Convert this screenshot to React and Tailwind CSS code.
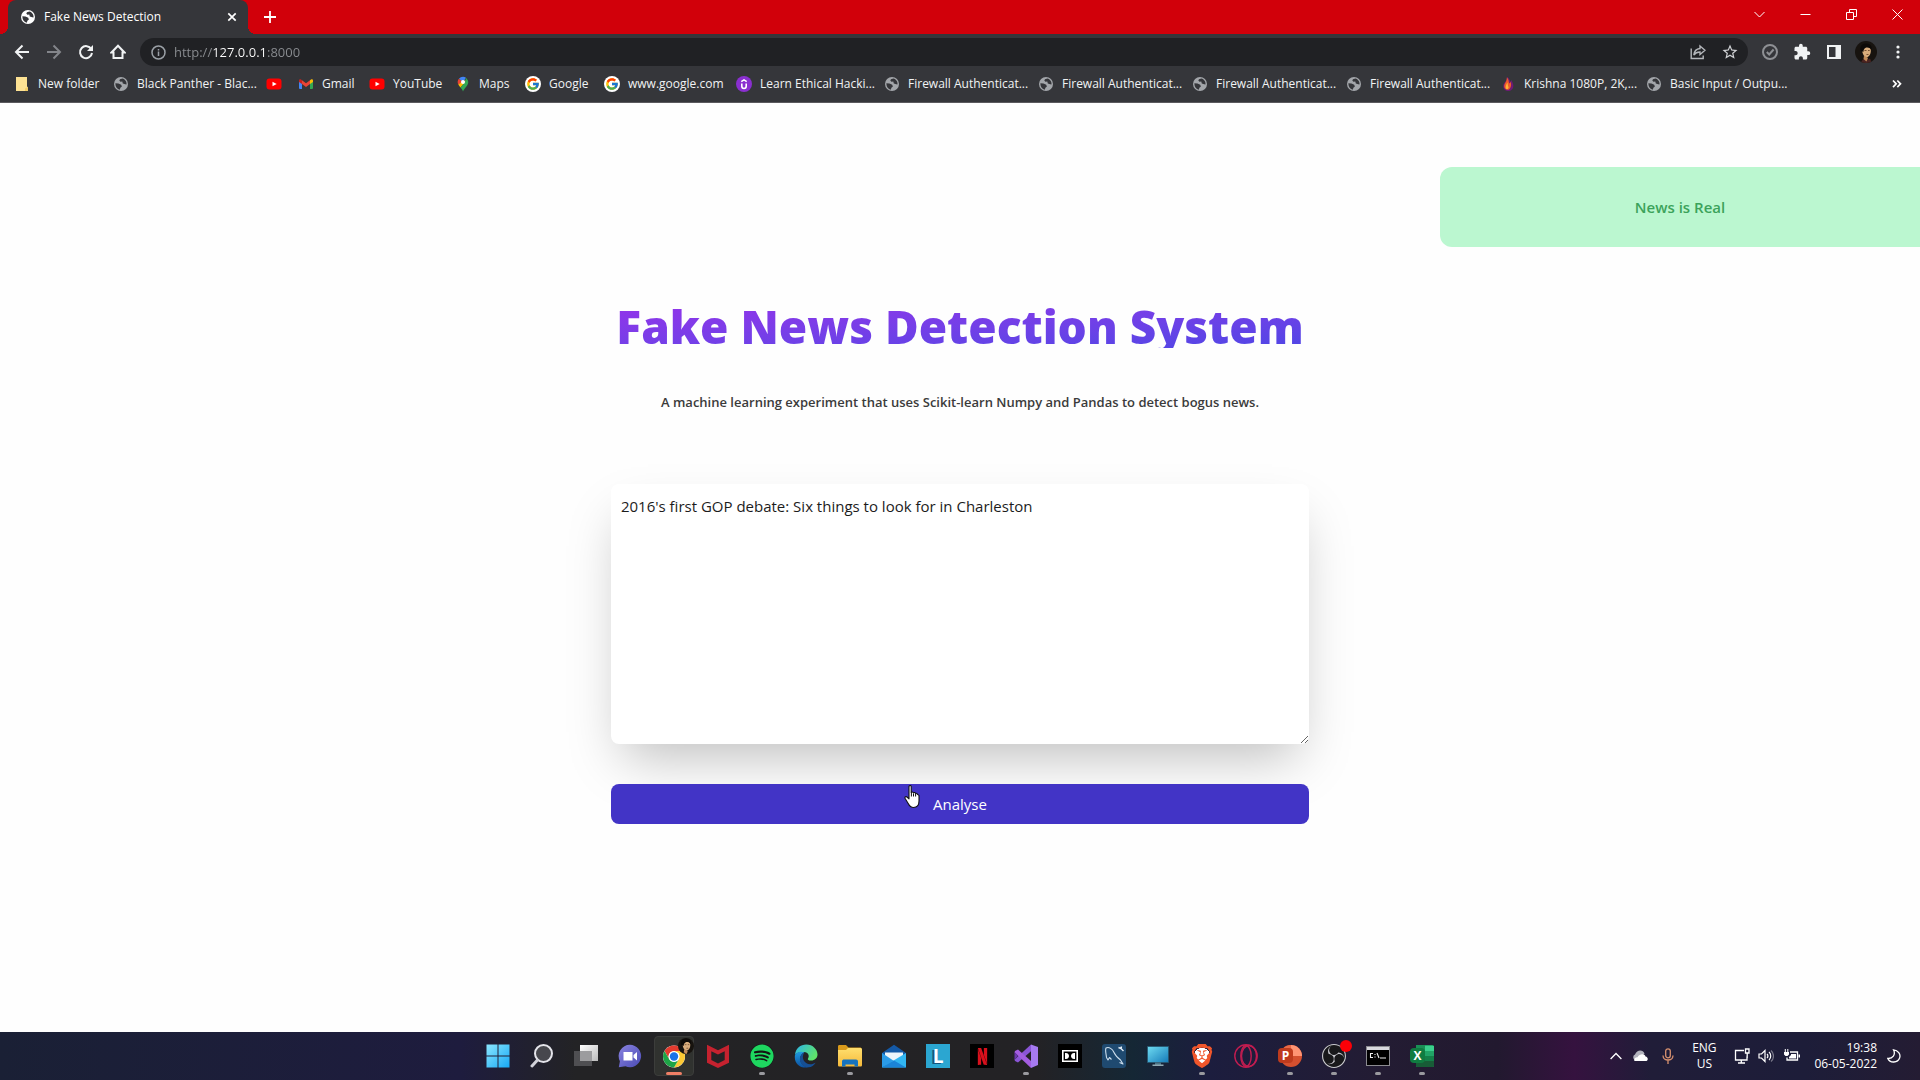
import React from 'react';
import { FcGoogle } from 'react-icons/fc';
import { FaSpotify } from 'react-icons/fa';
import { SiBrave, SiNetflix, SiObsstudio } from 'react-icons/si';
import { MdExtension, MdOutlineStarBorder } from 'react-icons/md';

/* ---------- browser icons ---------- */

const Globe = ({ className = 'text-[#a3a6aa]' }) => (
  <svg viewBox="0 0 16 16" className={`size-4 shrink-0 ${className}`}>
    <circle cx="8" cy="8" r="7" fill="currentColor" />
    <path d="M2.4 7.200 5.500 7.600 8.200 8.700 8.900 10.400 7.400 11.800 6.800 13.700C4.300 13.200 2.400 10.800 2.400 8z" fill="#35363a" />
    <path d="M9.400 2.500 7 3.300 6.300 4.600 7.400 5.800 9.300 5.600 9.800 7.500 12.200 8.200 13.500 8.600C13.900 5.600 12 3.200 9.400 2.500z" fill="#35363a" />
  </svg>
);

const YouTube = () => (
  <svg viewBox="0 0 16 16" className="size-4 shrink-0">
    <rect x="0.5" y="2.500" width="15" height="11" rx="3" fill="#f00" />
    <path d="m6.500 5.700 4.200 2.300-4.200 2.300z" fill="#fff" />
  </svg>
);

const Gmail = () => (
  <svg viewBox="0 0 16 16" className="size-4 shrink-0">
    <path d="M1 4.500 4 6.800V13H2a1 1 0 0 1-1-1z" fill="#4285f4" />
    <path d="M15 4.500 12 6.800V13h2a1 1 0 0 0 1-1z" fill="#34a853" />
    <path d="M4 4.200 8 7.200l4-3v3.900l-4 3-4-3z" fill="#ea4335" />
    <path d="M12 4.200 13 3.400c.8-.6 2 0 2 1v1.500l-3 2.200z" fill="#fbbc04" />
    <path d="M4 4.200 3 3.400c-.8-.6-2 0-2 1v1.500l3 2.200z" fill="#c5221f" />
  </svg>
);

const Maps = () => (
  <svg viewBox="0 0 16 16" className="size-4 shrink-0">
    <path d="M8 .8a5.300 5.300 0 0 0-4.100 2L8 6.200l3-4.500A5.300 5.300 0 0 0 8 .8z" fill="#4285f4" />
    <path d="M3.900 2.800A5.300 5.300 0 0 0 3.300 8.500L8 6z" fill="#ea4335" />
    <path d="M3.300 8.500c.5 1.200 1.400 2 2.200 3.100L11.500 4.500 8 5z" fill="#fbbc04" />
    <path d="M11 1.700 13 4.500c.8 2.600-.3 4.300-1.600 5.900C9.500 12.600 8.800 13.500 8 15.500c-.6-1.600-1.300-2.700-2.500-3.900L10 6.300z" fill="#34a853" />
    <circle cx="8" cy="5.900" r="2" fill="#fff" />
  </svg>
);

const Google = () => (
  <span className="flex size-4 shrink-0 items-center justify-center rounded-full bg-white">
    <FcGoogle className="size-3.5" />
  </span>
);

const Udemy = () => (
  <svg viewBox="0 0 16 16" className="size-4 shrink-0">
    <circle cx="8" cy="8" r="8" fill="#8a2fd0" />
    <path d="M5.800 7.500v2.800a2.200 2.200 0 0 0 4.400 0V7.500" fill="none" stroke="#fff" strokeWidth="1.6" />
    <path d="M5.300 5.700 8 3.900l2.700 1.800" fill="none" stroke="#fff" strokeWidth="1.4" />
  </svg>
);

const Flame = () => (
  <svg viewBox="0 0 16 16" className="size-4 shrink-0">
    <path d="M7 .8c3 2 2.500 4 3.500 5l.8-1.800c1.800 3 2.600 5.500 1.700 8-1 2.600-4 3.500-6 2.900C4 14.200 2.700 11.500 3.400 9 4 6.500 7.200 4.800 7 .8z" fill="#6d1b74" />
    <path d="M6.800 1.500c2.500 2.300 1.500 4.700 2.800 6l.8-1.700c1.300 2.800.8 5.600-1.300 7.700-2.700 1-5.100-.8-4.900-3.500C4.400 7 7.100 5.500 6.800 1.500z" fill="#ef5b2b" />
    <path d="M7.300 6.500c.8 1.800.3 3.700 1.300 4.600-.1 1.500-.9 2.200-1.700 2.200-2.300-1.500-.8-4 .4-6.800z" fill="#ffb43a" />
  </svg>
);

const Folder = () => (
  <svg viewBox="0 0 16 16" className="size-4 shrink-0">
    <path d="M2 1h11v9.500l.8.500V15H2z" fill="#fde293" />
    <path d="M11 12.500 13.800 11v4H11z" fill="#f5cf66" />
  </svg>
);

const FaceShapes = () => (
  <>
    <path d="M7 8c1-3 7-4 8.500-.5.6 2 .3 4.500-.5 6-1 2-2.500 3-4 2.800C9 16 7 12 7 8z" fill="#d9ad7c" />
    <path d="M5.500 9.500C4.500 4.500 8 2 12 2.500c3.500.3 5.500 3 4.300 6.500-1.500-2.500-4-2.800-6-2-1.500.8-1.700 2.500-2 4z" fill="#0d0a08" />
    <path d="m9 14.500 4 2.500-1.500 3.500-3-2.500z" fill="#c18b59" />
    <path d="M9.500 9.500h2M13 9.500h1.700M11.500 13.500h2" stroke="#5e3a20" strokeWidth="0.8" />
  </>
);

const Face = () => (
  <svg viewBox="0 0 22 22" className="size-[22px] shrink-0 rounded-full">
    <rect width="22" height="22" fill="#17130f" />
    <path d="M6 22c.6-3 2.500-4 4-5l3 1.500 2-1c.8 1.500 1 2.500 1 4.500z" fill="#4a2422" />
    <FaceShapes />
  </svg>
);

const Line = ({ children, className = 'size-4', w = 2, box = '0 0 16 16' }) => (
  <svg viewBox={box} className={className} fill="none" stroke="currentColor" strokeWidth={w}>
    {children}
  </svg>
);

const bookmarks = [
  { icon: Folder, text: 'New folder', width: 'w-[99px]' },
  { icon: Globe, text: 'Black Panther - Blac...', width: 'w-[153px]' },
  { icon: YouTube, text: '', width: 'w-8' },
  { icon: Gmail, text: 'Gmail', width: 'w-[71px]' },
  { icon: YouTube, text: 'YouTube', width: 'w-[86px]' },
  { icon: Maps, text: 'Maps', width: 'w-[70px]' },
  { icon: Google, text: 'Google', width: 'w-[79px]' },
  { icon: Google, text: 'www.google.com', width: 'w-[132px]' },
  { icon: Udemy, text: 'Learn Ethical Hacki...', width: 'w-[148px]' },
  { icon: Globe, text: 'Firewall Authenticat...', width: 'w-[154px]' },
  { icon: Globe, text: 'Firewall Authenticat...', width: 'w-[154px]' },
  { icon: Globe, text: 'Firewall Authenticat...', width: 'w-[154px]' },
  { icon: Globe, text: 'Firewall Authenticat...', width: 'w-[154px]' },
  { icon: Flame, text: 'Krishna 1080P, 2K,...', width: 'w-[146px]' },
  { icon: Globe, text: 'Basic Input / Outpu...', width: 'w-[154px]' },
];

const ToolButton = ({ label, children, className = 'text-[#f1f3f4]' }) => (
  <button aria-label={label} className={`flex size-8 shrink-0 items-center justify-center ${className}`}>
    {children}
  </button>
);

const WindowButton = ({ label, children }) => (
  <button aria-label={label} className="flex h-7 w-[46px] items-center justify-center text-white">
    <Line box="0 0 11 11" className="size-[11px]" w={1}>{children}</Line>
  </button>
);

function TitleBar() {
  return (
    <div className="flex h-[34px] bg-[#d1000a] pl-2">
      <div className="relative flex w-60 items-center rounded-t-lg bg-[#35363a] pr-2 pl-3">
        <span className="absolute -right-2 bottom-0 size-2 bg-[radial-gradient(circle_at_100%_0,#d1000a_8px,#35363a_8px)]" />
        <span className="absolute bottom-0 -left-2 size-2 bg-[radial-gradient(circle_at_0_0,#d1000a_8px,#35363a_8px)]" />
        <Globe className="text-white" />
        <span className="flex-1 pl-2 text-[12px] whitespace-nowrap text-white">Fake News Detection</span>
        <button aria-label="Close tab" className="flex size-4 items-center justify-center text-white">
          <Line className="size-4" w={1.7}><path d="m4.300 4.300 7.400 7.400m0-7.400-7.400 7.400" /></Line>
        </button>
      </div>
      <button aria-label="New tab" className="ml-3.5 flex w-4 items-center justify-center text-white">
        <Line className="size-4" w={1.8}><path d="M8 2v12M2 8h12" /></Line>
      </button>
      <div className="ml-auto flex">
        <WindowButton label="Search tabs"><path d="m.5 3 5 5 5-5" /></WindowButton>
        <WindowButton label="Minimize"><path d="M.5 5.500h10" /></WindowButton>
        <WindowButton label="Restore"><path d="M.5 3.500h7v7h-7zM3.500 3.500v-3h7v7h-3" /></WindowButton>
        <WindowButton label="Close"><path d="m.5.5 10 10m0-10-10 10" /></WindowButton>
      </div>
    </div>
  );
}

function Toolbar() {
  return (
    <div className="flex h-9 items-center bg-[#35363a] px-1.5">
      <ToolButton label="Back"><Line><path d="M15 8H2m6.500-6.500L2 8l6.500 6.500" /></Line></ToolButton>
      <ToolButton label="Forward" className="text-[#83858a]"><Line><path d="M1 8h13M7.500 1.500 14 8l-6.500 6.500" /></Line></ToolButton>
      <ToolButton label="Reload">
        <Line>
          <path d="M13.300 5.200A6 6 0 1 0 14 9" />
          <path d="M15 1v6H9z" fill="currentColor" stroke="none" />
        </Line>
      </ToolButton>
      <ToolButton label="Home"><Line><path d="M1.500 8.500H3.500V14h9V8.500h2L8 1.800z" /></Line></ToolButton>
      <form className="ml-1.5 flex h-7 flex-1 items-center rounded-full bg-[#202124] pr-0.5 pl-[11px]" onSubmit={(e) => e.preventDefault()}>
        <Line className="size-[15px] text-[#9aa0a6]" w={1.5} box="0 0 15 15">
          <circle cx="7.500" cy="7.500" r="6.500" />
          <path d="M7.500 6.500v4.500M7.500 4v1.500" />
        </Line>
        <input
          aria-label="Address"
          defaultValue="http://127.0.0.1:8000"
          className="ml-2 h-6 min-w-0 flex-1 bg-[linear-gradient(90deg,#8b8e92_38px,#ffffff_38px_93px,#8b8e92_93px)] bg-clip-text text-[13px] text-transparent outline-none"
        />
        <ToolButton label="Share" className="text-[#b4b7bb]">
          <Line w={1.4}>
            <path d="M1.200 4.500v10h12v-3" />
            <path d="M10 2l5 4.300-5 4.200V8c-3 0-4.800 1-6.200 3C4.200 7.500 6.200 4.900 10 4.500z" />
          </Line>
        </ToolButton>
        <ToolButton label="Bookmark this page" className="text-[#d0d2d5]"><MdOutlineStarBorder className="size-[18px]" /></ToolButton>
      </form>
      <div className="flex pl-1.5">
        <ToolButton label="Extension" className="text-[#8e9094]">
          <Line><circle cx="8" cy="8" r="7" /><path d="m4.800 8 2.400 2.500 4.400-5" /></Line>
        </ToolButton>
        <ToolButton label="Extensions"><MdExtension className="size-[18px]" /></ToolButton>
        <ToolButton label="Side panel"><Line><path d="M2 2h12v12H2z" /><path d="M9.500 2h5v12h-5z" fill="currentColor" stroke="none" /></Line></ToolButton>
        <ToolButton label="Profile"><Face /></ToolButton>
        <ToolButton label="Menu">
          <svg viewBox="0 0 16 16" className="size-4" fill="currentColor">
            <circle cx="8" cy="3" r="1.600" /><circle cx="8" cy="8" r="1.600" /><circle cx="8" cy="13" r="1.600" />
          </svg>
        </ToolButton>
      </div>
    </div>
  );
}

function BookmarkBar() {
  return (
    <nav className="flex h-[33px] items-center overflow-hidden border-b border-[#5b5a5e] bg-[#35363a] pr-[18px] pb-1 pl-3.5">
      {bookmarks.map(({ icon: Icon, text, width }, i) => (
        <a key={i} href="#" aria-label={text || 'YouTube'} className={`flex shrink-0 items-center gap-2 text-[12px] leading-4 whitespace-nowrap text-[#f1f3f4] ${width}`}>
          <Icon />
          {text}
        </a>
      ))}
      <button aria-label="More bookmarks" className="ml-auto text-white">
        <Line box="0 0 10 10" className="size-2.5" w={1.7}><path d="m1 1.500 3.200 3.300L1 8.100M5.300 1.500l3.200 3.300-3.200 3.300" /></Line>
      </button>
    </nav>
  );
}

/* ---------- page ---------- */

const HandCursor = () => (
  <svg viewBox="0 0 16 24" className="pointer-events-none absolute top-px left-[42%] h-6 w-4">
    <path
      d="M5 1.500c0-1.300 2.200-1.300 2.200 0v6c.5-.9 2-.7 2.200.4.600-.7 1.900-.5 2.100.6.700-.5 1.900-.1 2 .9l1.500 1v5.600c0 3.500-1.800 6.500-5.500 6.500-2.800 0-4.200-1.800-5.300-4L1 13.200c-.4-1.300 1-2 2-1.200l2 1.800z"
      fill="#fff" stroke="#111" strokeWidth="1.1" strokeLinejoin="round"
    />
    <path d="M7.400 7.500v4M9.500 8.500v3M11.600 9v2.500" stroke="#111" strokeWidth="1" />
  </svg>
);

function Page() {
  return (
    <main className="flex flex-1 flex-col bg-[#fefefe] pt-16">
      <p role="status" className="flex h-20 w-1/4 items-center justify-center self-end rounded-l-xl bg-[#bbf7d0] text-[15px] font-semibold text-[#3ba35b]">
        News is Real
      </p>
      <div className="mt-[57px] flex flex-col items-center">
        <h1 className="bg-linear-to-br from-[#9333ea] to-[#4f46e5] bg-clip-text text-[46px] leading-11 font-extrabold whitespace-nowrap text-transparent">
          Fake News Detection System
        </h1>
        <p className="mt-11 text-[13px] leading-5 font-semibold text-[#3b3b3b]">
          A machine learning experiment that uses Scikit-learn Numpy and Pandas to detect bogus news.
        </p>
      </div>
      <form className="mx-auto mt-18 flex w-4/11 flex-col gap-10" onSubmit={(e) => e.preventDefault()}>
        <textarea
          aria-label="News text"
          defaultValue="2016's first GOP debate: Six things to look for in Charleston"
          className="block h-65 w-full rounded-lg bg-white p-2.5 text-[15px] leading-6 text-[#1c1c1c] shadow-2xl outline-none"
        />
        <button className="relative h-10 rounded-lg bg-[#4234c6] text-[15px] text-white">
          Analyse
          <HandCursor />
        </button>
      </form>
    </main>
  );
}

/* ---------- taskbar ---------- */

const Art = ({ children, box = '0 0 24 24' }) => <svg viewBox={box} className="size-6">{children}</svg>;

const Defs = () => (
  <svg className="absolute size-0" aria-hidden="true">
    <defs>
      <linearGradient id="win" x1="0" y1="0" x2="1" y2="1"><stop stopColor="#8be6ff" /><stop offset="1" stopColor="#17a9f5" /></linearGradient>
      <linearGradient id="task" x1="0" y1="0" x2="1" y2="1"><stop stopColor="#fff" /><stop offset="1" stopColor="#bbb" /></linearGradient>
      <linearGradient id="chat" x1="0" y1="0" x2="1" y2="1"><stop stopColor="#8a83e0" /><stop offset="1" stopColor="#4a4bb5" /></linearGradient>
      <linearGradient id="edgeA" x1="0" y1="0" x2="1" y2="0.5"><stop stopColor="#2bb4ec" /><stop offset="1" stopColor="#5ee36a" /></linearGradient>
      <linearGradient id="edgeB" x1="0" y1="0" x2="0" y2="1"><stop stopColor="#1f9be0" /><stop offset="1" stopColor="#0c4f9e" /></linearGradient>
      <linearGradient id="fold" x1="0" y1="0" x2="0" y2="1"><stop stopColor="#ffdf6e" /><stop offset="1" stopColor="#f5b93a" /></linearGradient>
      <linearGradient id="mon" x1="0" y1="0" x2="1" y2="1"><stop stopColor="#6fdcf2" /><stop offset="1" stopColor="#1479b8" /></linearGradient>
    </defs>
  </svg>
);

const ChromeArt = () => (
  <span className="relative">
    <Art>
      <circle cx="12" cy="12.500" r="11" fill="#fff" />
      <path d="M2.500 7A11 11 0 0 1 21.500 7H12a5.500 5.500 0 0 0-4.800 8.200z" fill="#e33b2e" />
      <path d="M21.500 7A11 11 0 0 1 12 23.500l4.800-8.200A5.500 5.500 0 0 0 16.500 9.500z" fill="#fcc934" />
      <path d="M12 7h9.500l.8 2h-6z" fill="#fcc934" />
      <path d="M2.500 7A11 11 0 0 0 12 23.500l4.800-8.200a5.500 5.500 0 0 1-9.600 0z" fill="#1ea446" />
      <circle cx="12" cy="12.500" r="5.300" fill="#fff" />
      <circle cx="12" cy="12.500" r="4.200" fill="#1a73e8" />
    </Art>
    <svg viewBox="3 2 16 18" className="absolute -top-1.5 -right-2 size-4 rounded-full bg-[#17130f]">
      <FaceShapes />
    </svg>
  </span>
);

const LetterTile = ({ letter, tile }) => (
  <span className={`absolute top-1 left-0 flex size-[15px] items-center justify-center rounded-sm text-[12px] leading-none font-bold text-white ${tile}`}>{letter}</span>
);

const apps = [
  { name: 'Start', art: <Art><path d="M.5.500h11v11H.500zM12.500.500h11v11h-11zM.500 12.500h11v11H.500zM12.500 12.500h11v11h-11z" fill="url(#win)" /></Art> },
  { name: 'Search', art: <Art><circle cx="13.500" cy="9.500" r="8.500" fill="#47474d" stroke="#e4e4ea" strokeWidth="2" /><path d="m7.500 16-5.500 6" stroke="#d2d2da" strokeWidth="3" strokeLinecap="round" /></Art> },
  { name: 'Task view', art: <Art><path d="M6 1h18v16H6z" fill="url(#task)" /><path d="M0 7h18v15H0z" fill="#57575a" opacity=".85" /><path d="M6 7h12v10H6z" fill="#9c9c9e" /></Art> },
  { name: 'Chat', art: <Art><path d="M12 .8a11.200 11.200 0 1 1-4.500 21.500L.8 23.200l1.100-6A11.200 11.200 0 0 1 12 .8z" fill="url(#chat)" /><path d="M5.500 8h9v8.500h-9zM15.500 11l3.500-3v8.500l-3.500-3z" fill="#fff" /></Art> },
  { name: 'Chrome', art: <ChromeArt />, active: true },
  { name: 'McAfee', art: <Art><path d="m1 .8 11 5.400L23 .8v18L12 24 1 18.800zM5.300 7.300v8.800l6.700 3.300 6.700-3.300V7.300L12 10.500z" fill="#c5222f" fillRule="evenodd" /></Art> },
  { name: 'Spotify', art: <span className="rounded-full bg-[#141414]"><FaSpotify className="size-6 text-[#1ed760]" /></span>, open: true },
  {
    name: 'Edge',
    art: (
      <Art>
        <path d="M1 11C1.500 4.500 6.500.5 12.300.5 19 .5 23.500 5.500 23.500 10.500c0 3.600-2.800 6-6.300 6-2.700 0-3.900-1-3.200-2.100 1.700-2.300.6-6.200-4-6.400C5.500 7.800 2.300 9 1 11z" fill="url(#edgeA)" />
        <path d="M1 11c2-3.200 6.500-4 9.500-2.400-2.500.6-4.300 3-4.300 6.300 0 4.500 4 8.300 8.600 8.300C6.500 25.300-.5 19 1 11z" fill="url(#edgeB)" />
        <path d="M10.300 8.700c-3.500 4.500-.3 11.500 6 11.500 2 0 3.600-.6 5.300-1.500-1.500 2.700-4.200 4.300-7 4.600-5 .2-8.700-3.700-8.700-8.300 0-3.300 1.900-5.700 4.400-6.300z" fill="#164f94" />
      </Art>
    ),
  },
  { name: 'File Explorer', art: <Art><path d="M0 2.500C0 1.500.6 1 1.500 1H8l2.500 2.500H22c1 0 1.500.5 1.500 1.500v3H0z" fill="#d99a1b" /><path d="M0 6h8l2-2h12.500c.9 0 1.500.6 1.500 1.500V21c0 1-.6 1.500-1.500 1.500h-21C.6 22.500 0 22 0 21z" fill="url(#fold)" /><path d="M4 22.500v-5C4 16 5 15.500 6 15.500h12c1.200 0 2 .7 2 2v5h-3.500v-2h-9v2z" fill="#1673be" /></Art>, open: true },
  { name: 'Mail', art: <Art><path d="M0 9 12 .8 24 9v4H0z" fill="#1459a6" /><path d="M3 8.500h18v6L12 18l-9-3.500z" fill="#eef5fb" /><path d="M0 9l12 8-12 6.500z" fill="#2a9be8" /><path d="M24 9 0 23.500h24z" fill="#31b6f2" /><path d="m12 16.500 12 7H0z" fill="#1b84d8" /></Art> },
  { name: 'Lenovo Vantage', art: <span className="flex size-6 items-center justify-center bg-[#2ba6d1] text-[19px] leading-none font-bold text-white [text-shadow:-2px_1px_0_#15547c]">L</span> },
  { name: 'Netflix', art: <span className="flex size-6 items-center justify-center bg-black"><SiNetflix className="size-[17px] text-[#d8101c]" /></span> },
  { name: 'Visual Studio', art: <Art><path d="M17 .5 24 3v18l-7 3z" fill="#a67af0" /><path d="M17 .5v6.800L4 18.500 1 17l-.5-1.300L17 .5z" fill="#8a55d6" /><path d="M17 24v-7L4 5.500 1 7l-.5 1.300L17 24z" fill="#a35de0" /><path d="M.5 8 4 11.800.5 16z" fill="#6a36ad" /></Art>, open: true },
  { name: 'Dolby', art: <span className="flex size-6 items-center justify-center bg-black"><svg viewBox="0 0 16 12" className="h-3 w-4"><path d="M.8.800h14.400v10.400H.800z" fill="none" stroke="#fff" strokeWidth="1.6" /><path d="M3 3h1c4 0 4 6 0 6H3zM13 3h-1c-4 0-4 6 0 6h1z" fill="#fff" /></svg></span> },
  { name: 'MySQL Workbench', art: <Art><rect width="24" height="24" rx="3" fill="#1f4a70" /><path d="M4.500 13.500C4 9 3 6 4 4c3-1.500 6.500 1 8 4.500 1.500 3.500 4 5.500 6.500 7.500l2.500 4-3.500-1.500M4.500 13.500l1.500 2.500 1.500-2.500 2 2" fill="none" stroke="#cfe0ee" strokeWidth="1.1" strokeLinejoin="round" /><path d="m16.500 3.500 2.500 1 2.500 2.500m-2.500-2.500.5-2" fill="none" stroke="#e5eff7" strokeWidth="1.4" /></Art> },
  { name: 'This PC', art: <Art><path d="M1.500 2.500h21v16h-21z" fill="url(#mon)" stroke="#27566e" strokeWidth=".8" /><path d="M9 18.500h6v2.500H9z" fill="#4b7385" /><path d="M6.500 20.500h11V22h-11z" fill="#8fa8b3" /></Art> },
  { name: 'Brave', art: <span className="flex size-6 items-center justify-center bg-[radial-gradient(circle,#ffffff_8px,transparent_8px)]"><SiBrave className="size-6 text-[#f1562b]" /></span>, open: true },
  { name: 'Opera GX', art: <Art><g fill="none" stroke="#c01d50" strokeWidth="1.4"><circle cx="12" cy="12" r="11.200" /><ellipse cx="12" cy="12" rx="5.200" ry="10.500" /><ellipse cx="15" cy="12" rx="7.500" ry="10.500" /></g></Art> },
  { name: 'PowerPoint', art: <span className="relative"><Art><circle cx="13" cy="12" r="11" fill="#d5502f" /><path d="M13 1a11 11 0 0 1 11 11H13z" fill="#ff9473" /><path d="M13 1v11H2A11 11 0 0 1 13 1z" fill="#ea6a47" /></Art><LetterTile letter="P" tile="bg-[#bf3b1d]" /></span>, open: true },
  { name: 'OBS Studio', art: <span className="relative flex rounded-full bg-[#18181b]"><SiObsstudio className="size-6 text-[#c9c9cf]" /><span className="absolute -top-1 -right-1.5 size-3 rounded-full bg-[#fb0007]" /></span>, open: true },
  { name: 'Command Prompt', art: <span className="flex h-5 w-6 flex-col border border-[#8b8b90] bg-black"><span className="h-[3px] bg-[#d9d9de]" /><svg viewBox="0 0 22 15" className="h-[15px] w-[22px]"><path d="M6 3.500H3.500v4H6M8 4v1m0 1.500v1M10 3l2 5M13 8h6" stroke="#eee" fill="none" strokeWidth="1.1" /></svg></span>, open: true },
  { name: 'Excel', art: <span className="relative"><Art><rect x="6" y="1" width="18" height="22" rx="1.500" fill="#21a366" /><path d="M6 1h9v11H6z" fill="#1a8f56" /><path d="M15 2h9v5h-9z" fill="#3bcf8c" /><path d="M6 12h18v9.500c0 1-.5 1.500-1.500 1.500h-15C6.500 23 6 22.500 6 21.500z" fill="#185c37" /><path d="M15 12h9v5h-9z" fill="#148049" /></Art><LetterTile letter="X" tile="bg-[#107c41]" /></span>, open: true },
];

function Taskbar() {
  return (
    <footer className="flex h-12 items-center bg-[linear-gradient(90deg,#1a2035_0%,#1e1c3e_24%,#232325_30%,#232225_54%,#152735_59%,#1c1d3e_63%,#231c33_72%,#22192f_78%,#35123f_82%,#201d38_86%,#1d1d39_94%,#241c33_100%)] text-white">
      <Defs />
      <div className="flex-1 pl-[19px]" />
      <div className="flex gap-1">
        {apps.map(({ name, art, active, open }) => (
          <button key={name} aria-label={name} className={`relative flex size-10 items-center justify-center rounded ${active ? 'border border-[#3c3d3b] bg-[#30322f]' : ''}`}>
            {art}
            {active && <span className="absolute bottom-0 h-[3px] w-4 rounded-full bg-[#ee7f66]" />}
            {open && <span className="absolute bottom-px h-[3px] w-1.5 rounded-full bg-[#9a9a9f]" />}
          </button>
        ))}
      </div>
      <div className="flex flex-1 items-center justify-end pr-[19px]">
        <button aria-label="Show hidden icons" className="mr-2.5"><Line className="h-2 w-3" w={1.3} box="0 0 12 8"><path d="m.6 7 5.400-5.500L11.400 7" /></Line></button>
        <button aria-label="OneDrive" className="mr-3.5">
          <svg viewBox="0 0 16 12" className="h-3 w-4"><path d="M3 10a3 3 0 0 1 0-5.500C5-.5 11-.5 12.500 3.500L9 8z" fill="#b3b3bd" /><path d="M2.500 11C1.500 9 3.500 7 5.500 7.300 8 3 13 4 13.500 6.500c3 .5 3 4.500 0 4.500z" fill="#fff" /></svg>
        </button>
        <button aria-label="Microphone" className="mr-3.5 text-[#d7916f]">
          <Line className="h-4 w-3" w={1.3} box="0 0 12 16"><rect x="3.700" y=".8" width="4.600" height="9" rx="2.300" /><path d="M1 7.500c0 6 10 6 10 0M6 12v4" /></Line>
        </button>
        <button className="mr-3.5 w-8 text-center text-[12px] leading-4">ENG<br />US</button>
        <button aria-label="Network" className="mr-2">
          <Line className="size-4" w={1.3}><path d="M10 2.500H1.500v9.500H13V8.500M4 15h7M7.300 12v3M11.500 1h3.500v4h-3.500zM13.200 5v5" /></Line>
        </button>
        <button aria-label="Volume" className="mr-2.5">
          <Line className="size-4" w={1.2}><path d="M1 6h2.500L7 2.500v11L3.500 10H1zM9 6c1.200 1 1.200 3 0 4M11 4c2.300 2 2.300 6 0 8" /><path d="M13 2.500c3.300 3 3.300 8 0 11" opacity=".4" /></Line>
        </button>
        <button aria-label="Battery" className="mr-3.5">
          <svg viewBox="0 0 16 14" className="h-3.5 w-4"><path d="M6 3h7.500v8H3V8.500" fill="none" stroke="#fff" strokeWidth="1.3" /><path d="M7 5h5v4.500H5V8l2-2zM14.500 5.500h1.500v3h-1.500zM0 3h5v2.500L3.500 7h-2L0 5.500zM.8 0h1v3h-1zM3.300 0h1v3h-1z" fill="#fff" /></svg>
        </button>
        <button className="mr-2.5 text-right text-[12px] leading-4">19:38<br />06-05-2022</button>
        <button aria-label="Notifications">
          <Line className="size-3.5" w={1.3} box="0 0 14 14"><path d="M6.500.8c2.500 5-1 9-5.700 8.700 2.200 5 10 4.500 11.800-.5C14 5 11 1.300 6.500.8z" /></Line>
        </button>
      </div>
    </footer>
  );
}

export default function App() {
  return (
    <div className="flex min-h-screen flex-col font-['Open_Sans','Noto_Sans',sans-serif]">
      <header>
        <TitleBar />
        <Toolbar />
        <BookmarkBar />
      </header>
      <Page />
      <Taskbar />
    </div>
  );
}
